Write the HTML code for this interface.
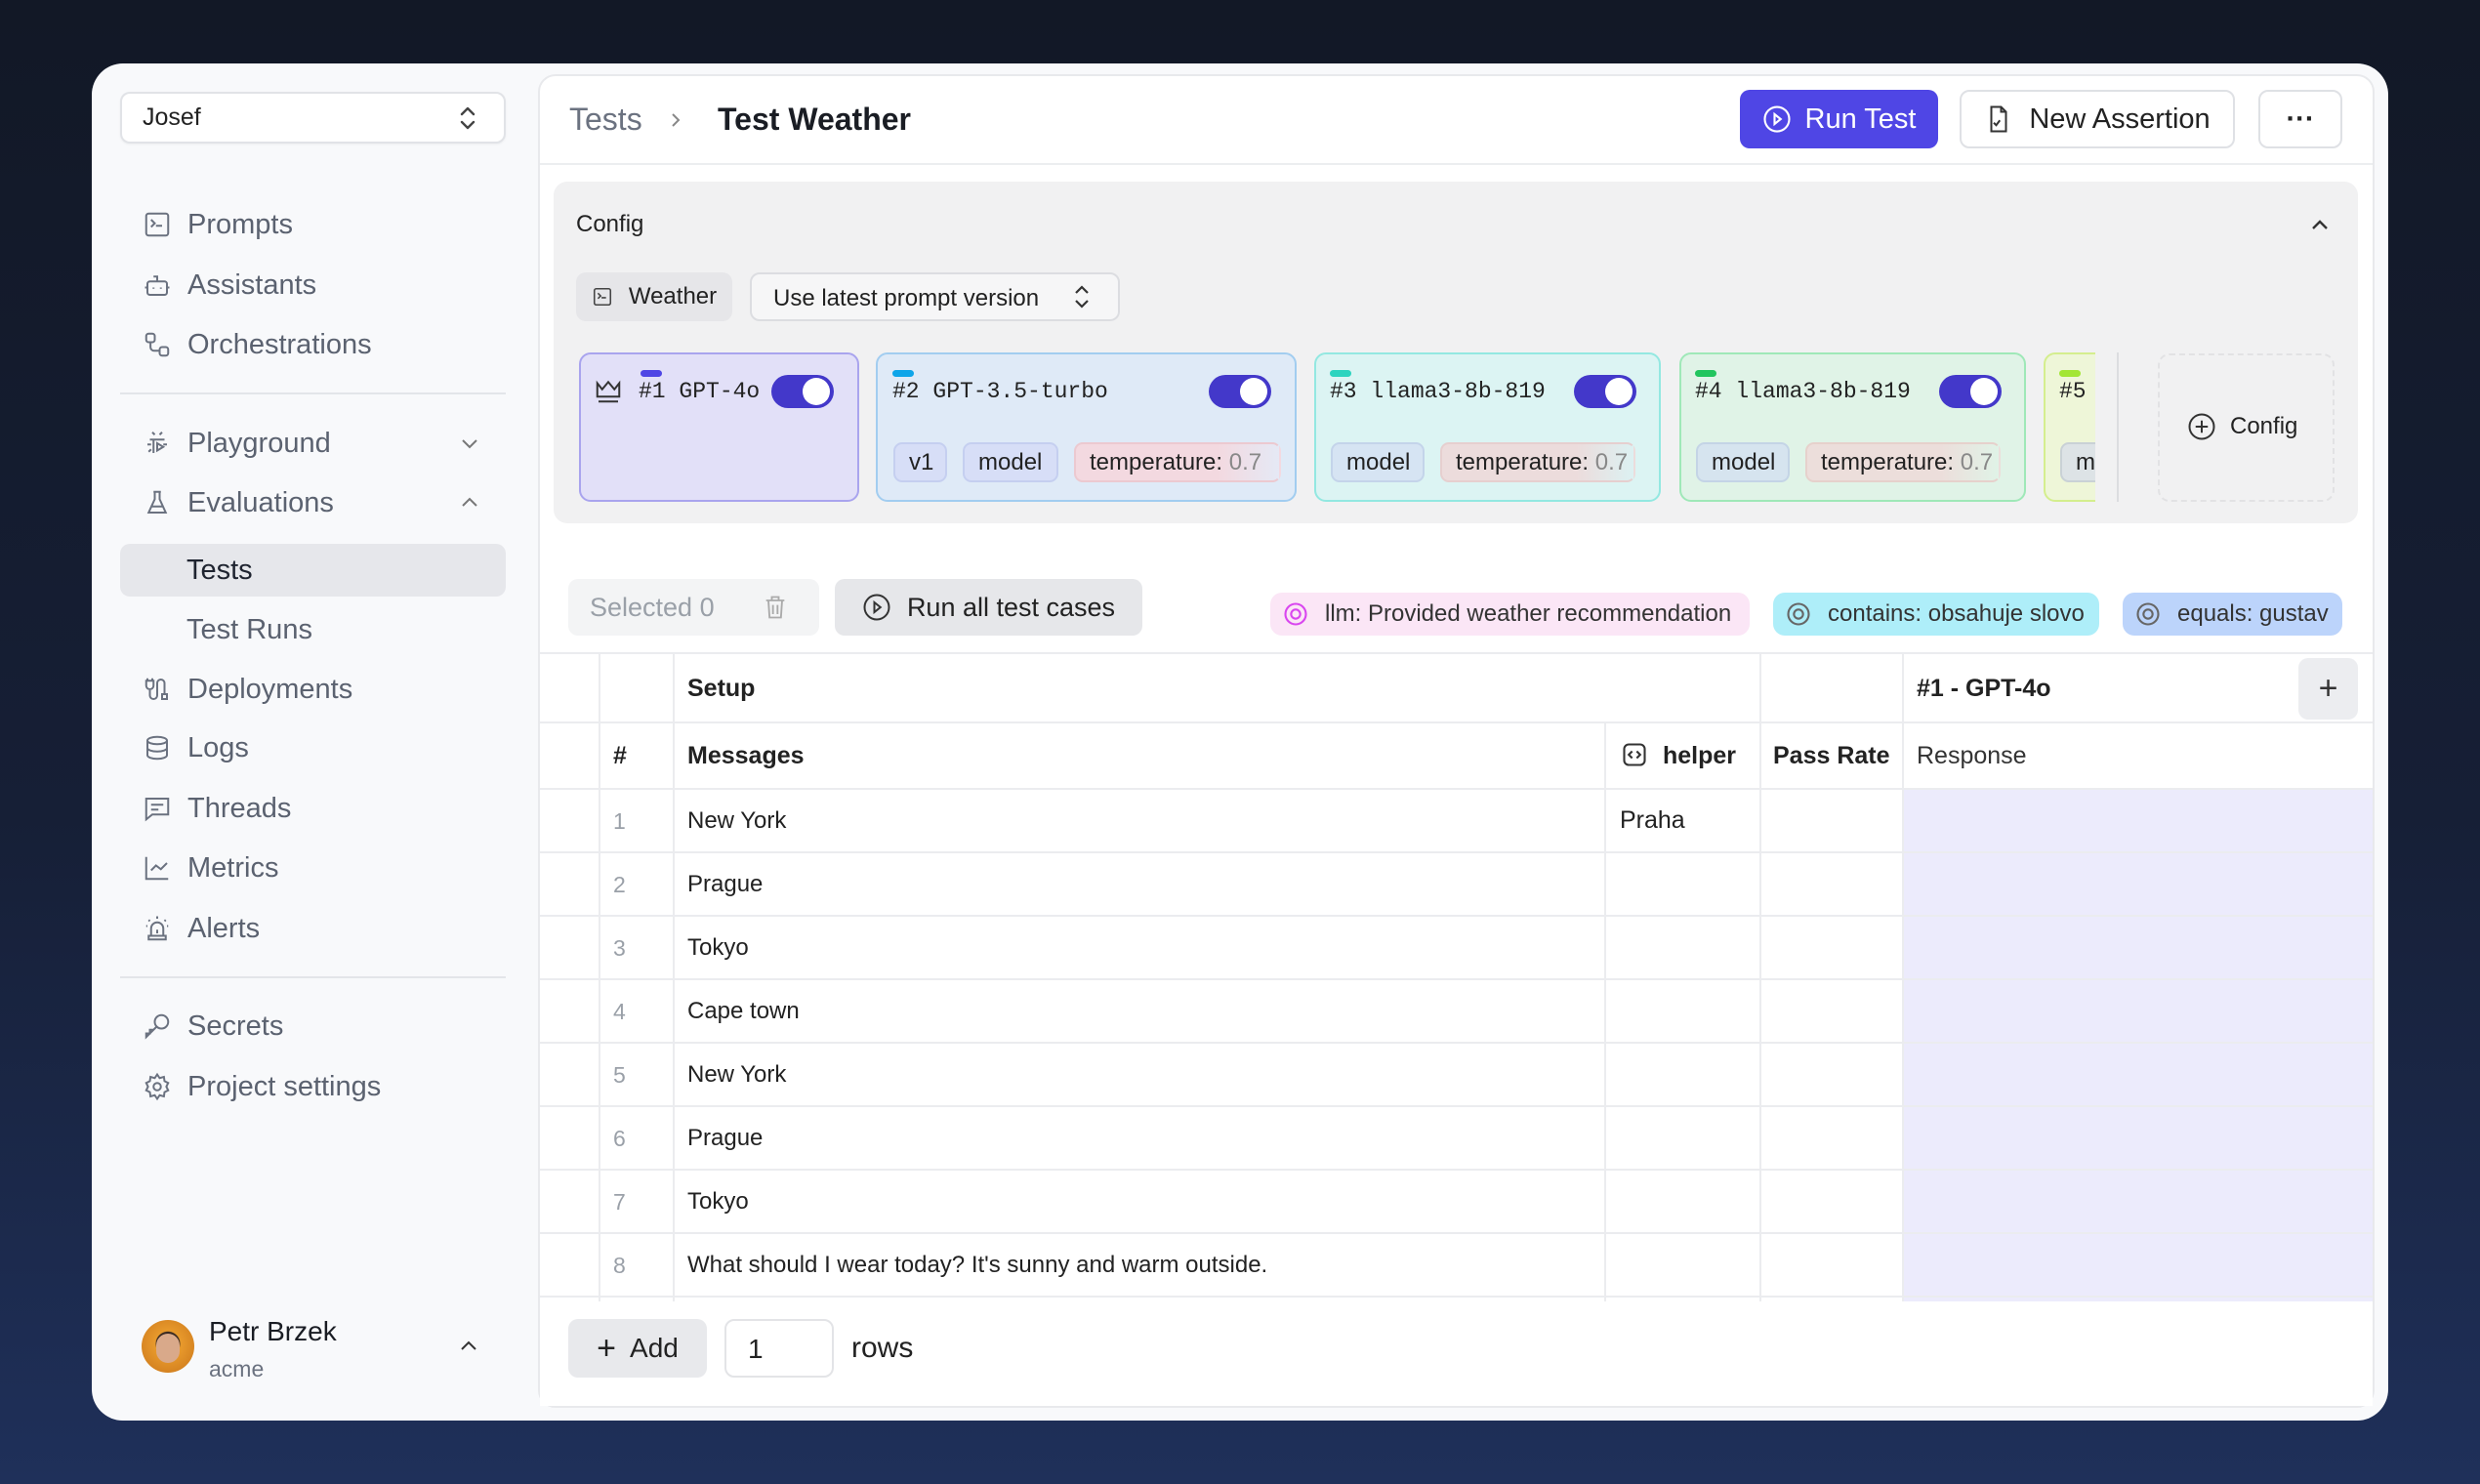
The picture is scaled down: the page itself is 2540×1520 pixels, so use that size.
<!DOCTYPE html>
<html><head><meta charset="utf-8"><style>
*{box-sizing:border-box;margin:0;padding:0}
body{width:2540px;height:1520px;overflow:hidden;font-family:"Liberation Sans",sans-serif;background:linear-gradient(180deg,#121826 0%,#161f36 55%,#1f305a 100%);position:relative}
.a{position:absolute}
.card{left:94px;top:65px;width:2352px;height:1390px;background:#f8f9fb;border-radius:32px}
.nav{left:143px;height:50px;width:380px;display:flex;align-items:center;font-size:29px;color:#5b6270}
.nav svg{width:30px;height:30px;margin-right:16px;margin-left:3px}
.sub{left:191px;font-size:29px;color:#5b6270;height:50px;line-height:50px}
.div{height:2px;background:#e3e5e9;left:123px;width:395px}
.main{left:551px;top:76px;width:1881px;height:1366px;background:#fff;border:2px solid #e8e9ec;border-radius:18px;overflow:hidden}
.btn{display:flex;align-items:center;justify-content:center;border-radius:10px;font-size:29px}
.mc{top:361px;height:153px;border-radius:12px;border:2.5px solid}
.mono{font-family:"Liberation Mono",monospace;font-size:23px;color:#222}
.bar{width:22px;height:7px;border-radius:4px}
.tg{width:64px;height:34px;border-radius:17px;background:#4338ca}
.tg:after{content:"";position:absolute;right:4px;top:3px;width:28px;height:28px;border-radius:50%;background:#fff}
.chip{top:453px;height:41px;border-radius:9px;font-size:24px;display:flex;align-items:center;padding:0 14px;color:#222;border:2px solid}
.as{top:607px;height:44px;border-radius:12px;font-size:24px;display:flex;align-items:center;color:#333}
.as svg{width:28px;height:28px;margin:0 16px 0 12px}
.hl{background:#ebecef;height:2px}
.vl{background:#ebecef;width:2px}
.td{font-size:24px;color:#222}
.num{font-size:23px;color:#9aa0a8}
</style></head><body>
<div class="a card"></div>

<div class="a" style="left:123px;top:94px;width:395px;height:53px;border:2px solid #e1e3e7;border-radius:10px;background:#fff;box-shadow:0 1px 2px rgba(0,0,0,.05)"></div>
<div class="a" style="left:146px;top:106px;font-size:25px;color:#222">Josef</div>
<svg class="a" style="left:466px;top:106px" width="26" height="30" viewBox="0 0 26 30" fill="none" stroke="#444" stroke-width="2.4" stroke-linecap="round" stroke-linejoin="round"><path d="M7 11l6-6 6 6M7 19l6 6 6-6"/></svg>

<div class="a nav" style="top:205px"><svg viewBox="0 0 24 24" fill="none" stroke="#6b7280" stroke-width="1.6"><rect x="3" y="3" width="18" height="18" rx="2"/><path d="M7 8l3 3-3 3M11 13h5"/></svg>Prompts</div>
<div class="a nav" style="top:267px"><svg viewBox="0 0 24 24" fill="none" stroke="#6b7280" stroke-width="1.6"><rect x="4" y="9" width="16" height="11" rx="2"/><path d="M12 9V5h-3M9 14v1M15 14v1M2 14h2M20 14h2"/></svg>Assistants</div>
<div class="a nav" style="top:328px"><svg viewBox="0 0 24 24" fill="none" stroke="#6b7280" stroke-width="1.6"><rect x="3" y="3" width="7" height="7" rx="2"/><rect x="14" y="14" width="7" height="7" rx="2"/><path d="M6.5 10v4a3 3 0 003 3H14"/></svg>Orchestrations</div>
<div class="a div" style="top:402px"></div>
<div class="a nav" style="top:429px"><svg viewBox="0 0 24 24" fill="none" stroke="#6b7280" stroke-width="1.6"><path d="M8 3l2 2M16 3l-2 2M6 9h12M4 13h3M17 13h3M5 19l2-2M9 9v11M12 12v6l5-3z"/></svg>Playground</div>
<svg class="a" style="left:470px;top:444px" width="22" height="20" viewBox="0 0 22 20" fill="none" stroke="#777" stroke-width="2"><path d="M4 7l7 7 7-7"/></svg>
<div class="a nav" style="top:490px"><svg viewBox="0 0 24 24" fill="none" stroke="#6b7280" stroke-width="1.6"><path d="M9 3h6M10 3v6L5 20h14L14 9V3M7 15h10"/></svg>Evaluations</div>
<svg class="a" style="left:470px;top:505px" width="22" height="20" viewBox="0 0 22 20" fill="none" stroke="#777" stroke-width="2"><path d="M4 13l7-7 7 7"/></svg>
<div class="a" style="left:123px;top:557px;width:395px;height:54px;background:#e6e7eb;border-radius:10px"></div>
<div class="a sub" style="top:559px;color:#1f2430">Tests</div>
<div class="a sub" style="top:620px">Test Runs</div>
<div class="a nav" style="top:681px"><svg viewBox="0 0 24 24" fill="none" stroke="#6b7280" stroke-width="1.6"><path d="M4 3v2M8 3v2M3 5h6v4a3 3 0 01-6 0zM6 12v5a3 3 0 006 0V7a3 3 0 016 0v9M16 16h4v4h-4z"/></svg>Deployments</div>
<div class="a nav" style="top:741px"><svg viewBox="0 0 24 24" fill="none" stroke="#6b7280" stroke-width="1.6"><ellipse cx="12" cy="6" rx="8" ry="3"/><path d="M4 6v12c0 1.7 3.6 3 8 3s8-1.3 8-3V6M4 12c0 1.7 3.6 3 8 3s8-1.3 8-3"/></svg>Logs</div>
<div class="a nav" style="top:803px"><svg viewBox="0 0 24 24" fill="none" stroke="#6b7280" stroke-width="1.6"><path d="M3 4h18v13H8l-5 4zM7 9h10M7 13h6"/></svg>Threads</div>
<div class="a nav" style="top:864px"><svg viewBox="0 0 24 24" fill="none" stroke="#6b7280" stroke-width="1.6"><path d="M3 3v18h18M7 14l4-4 4 3 5-5"/></svg>Metrics</div>
<div class="a nav" style="top:926px"><svg viewBox="0 0 24 24" fill="none" stroke="#6b7280" stroke-width="1.6"><path d="M7 18v-6a5 5 0 0110 0v6M5 21h14v-3H5zM12 2v2M3 10h1M20 10h1M5 5l1 1M19 5l-1 1M12 13v3"/></svg>Alerts</div>
<div class="a div" style="top:1000px"></div>
<div class="a nav" style="top:1026px"><svg viewBox="0 0 24 24" fill="none" stroke="#6b7280" stroke-width="1.6"><circle cx="15.5" cy="8.5" r="5.5"/><path d="M11.5 12.5L3 21v-3h3v-3h3l2.5-2.5"/></svg>Secrets</div>
<div class="a nav" style="top:1088px"><svg viewBox="0 0 24 24" fill="none" stroke="#6b7280" stroke-width="1.6"><circle cx="12" cy="12" r="3"/><path d="M12 2l2 3 3.5-1 .5 3.5L21 9l-1.5 3 1.5 3-3 1.5-.5 3.5-3.5-1-2 3-2-3-3.5 1-.5-3.5L3 15l1.5-3L3 9l3-1.5.5-3.5 3.5 1z"/></svg>Project settings</div>

<div class="a" style="left:145px;top:1352px;width:54px;height:54px;border-radius:50%;background:radial-gradient(circle at 50% 45%,#3a2a22 0 30%,#e89a2c 32%,#c9741a 100%)"></div>
<div class="a" style="left:160px;top:1366px;width:24px;height:30px;border-radius:12px;background:#d9a98a"></div>
<div class="a" style="left:214px;top:1348px;font-size:28px;color:#1a1d24">Petr Brzek</div>
<div class="a" style="left:214px;top:1389px;font-size:23px;color:#6b7280">acme</div>
<svg class="a" style="left:469px;top:1369px" width="22" height="20" viewBox="0 0 22 20" fill="none" stroke="#333" stroke-width="2"><path d="M4 13l7-7 7 7"/></svg>

<div class="a main"></div>
<div class="a" style="left:583px;top:104px;font-size:32px;color:#6b7280">Tests</div>
<svg class="a" style="left:684px;top:112px" width="16" height="22" viewBox="0 0 16 22" fill="none" stroke="#888" stroke-width="2"><path d="M5 5l6 6-6 6"/></svg>
<div class="a" style="left:735px;top:104px;font-size:32px;color:#1a1d24;font-weight:bold">Test Weather</div>

<div class="a btn" style="left:1782px;top:92px;width:203px;height:60px;background:#4f46e5;color:#fff"><svg width="30" height="30" viewBox="0 0 24 24" fill="none" stroke="#fff" stroke-width="1.7" style="margin-right:14px"><circle cx="12" cy="12" r="10"/><path d="M10 8l5 4-5 4z"/></svg>Run Test</div>
<div class="a btn" style="left:2007px;top:92px;width:282px;height:60px;border:2px solid #dfe1e5;color:#222;background:#fff"><svg width="30" height="30" viewBox="0 0 24 24" fill="none" stroke="#333" stroke-width="1.6" style="margin-right:16px"><path d="M14 2H6v20h12V6zM14 2v4h4M8 15l2 2 3-4"/></svg>New Assertion</div>
<div class="a btn" style="left:2313px;top:92px;width:86px;height:60px;border:2px solid #dfe1e5;color:#222;background:#fff;font-weight:bold">···</div>
<div class="a hl" style="left:553px;top:167px;width:1877px;background:#eceef0"></div>

<div class="a" style="left:567px;top:186px;width:1848px;height:350px;background:#f1f1f2;border-radius:14px"></div>
<div class="a" style="left:590px;top:216px;font-size:24px;color:#222">Config</div>
<svg class="a" style="left:2365px;top:221px" width="22" height="18" viewBox="0 0 22 18" fill="none" stroke="#333" stroke-width="2.4"><path d="M4 13l7-7 7 7"/></svg>
<div class="a btn" style="left:590px;top:279px;width:160px;height:50px;background:#e6e6e9;font-size:24px;color:#222"><svg width="22" height="22" viewBox="0 0 24 24" fill="none" stroke="#444" stroke-width="1.7" style="margin-right:16px"><rect x="3" y="3" width="18" height="18" rx="2"/><path d="M7 8l3 3-3 3M11 13h5"/></svg>Weather</div>
<div class="a" style="left:768px;top:279px;width:379px;height:50px;border:2px solid #dcdde1;border-radius:10px;background:#f6f6f7;font-size:24px;color:#222;padding:11px 0 0 22px">Use latest prompt version</div>
<svg class="a" style="left:1096px;top:290px" width="24" height="28" viewBox="0 0 24 28" fill="none" stroke="#333" stroke-width="2.2"><path d="M6 10l6-6 6 6M6 18l6 6 6-6"/></svg>

<div class="a mc" style="left:593px;width:287px;background:#e2e0f8;border-color:#a9a4ee"></div>
<svg class="a" style="left:608px;top:385px" width="30" height="30" viewBox="0 0 24 24" fill="none" stroke="#333" stroke-width="1.6"><path d="M3 6l4 5 5-6 5 6 4-5v11H3zM4 21h16"/></svg>
<div class="a bar" style="left:656px;top:379px;background:#4f46e5"></div>
<div class="a mono" style="left:654px;top:388px">#1 GPT-4o</div>
<div class="a tg" style="left:790px;top:384px"></div>

<div class="a mc" style="left:897px;width:431px;background:#dfeaf7;border-color:#a2cdf0"></div>
<div class="a bar" style="left:914px;top:379px;background:#0ea5e9"></div>
<div class="a mono" style="left:914px;top:388px">#2 GPT-3.5-turbo</div>
<div class="a tg" style="left:1238px;top:384px"></div>
<div class="a chip" style="left:915px;width:55px;background:#d7def7;border-color:#c5cff0">v1</div>
<div class="a chip" style="left:986px;width:98px;background:#d7def7;border-color:#c5cff0">model</div>
<div class="a chip" style="left:1100px;width:212px;background:linear-gradient(90deg,#f3d9e0 70%,#e5e9f5);border-color:#ecc9d0 transparent #ecc9d0 #ecc9d0">temperature:&nbsp;<span style="color:#888">0.7</span></div>

<div class="a mc" style="left:1346px;width:355px;background:#dcf4f3;border-color:#93e8e1"></div>
<div class="a bar" style="left:1362px;top:379px;background:#2dd4bf"></div>
<div class="a mono" style="left:1362px;top:388px">#3 llama3-8b-819</div>
<div class="a tg" style="left:1612px;top:384px"></div>
<div class="a chip" style="left:1363px;width:96px;background:#d6e4f3;border-color:#c4d4ea">model</div>
<div class="a chip" style="left:1475px;width:200px;background:linear-gradient(90deg,#ecdcdc 70%,#dcf1f2);border-color:#e6cfcf transparent #e6cfcf #e6cfcf">temperature:&nbsp;<span style="color:#888">0.7</span></div>

<div class="a mc" style="left:1720px;width:355px;background:#e0f3e7;border-color:#9fe8b8"></div>
<div class="a bar" style="left:1736px;top:379px;background:#22c55e"></div>
<div class="a mono" style="left:1736px;top:388px">#4 llama3-8b-819</div>
<div class="a tg" style="left:1986px;top:384px"></div>
<div class="a chip" style="left:1737px;width:96px;background:#d6e4ef;border-color:#c4d4e6">model</div>
<div class="a chip" style="left:1849px;width:200px;background:linear-gradient(90deg,#ecdedb 70%,#e0f3e7);border-color:#e6d1cc transparent #e6d1cc #e6d1cc">temperature:&nbsp;<span style="color:#888">0.7</span></div>

<div class="a" style="left:2093px;top:361px;width:53px;height:153px;overflow:hidden">
<div class="a mc" style="left:0;top:0;width:120px;background:#eef6d8;border-color:#d4ee8e"></div>
<div class="a bar" style="left:16px;top:18px;background:#a3e635"></div>
<div class="a mono" style="left:16px;top:27px">#5</div>
<div class="a chip" style="left:17px;top:92px;width:90px;background:#dde3e6;border-color:#c9d1d6">m</div>
</div>
<div class="a vl" style="left:2168px;top:361px;height:153px;background:#dcdde0"></div>
<div class="a" style="left:2210px;top:362px;width:181px;height:152px;border:2px dashed #e2e2e4;border-radius:12px"></div>
<div class="a" style="left:2240px;top:422px;font-size:24px;color:#222;display:flex;align-items:center"><svg width="30" height="30" viewBox="0 0 24 24" fill="none" stroke="#333" stroke-width="1.6" style="margin-right:14px"><circle cx="12" cy="12" r="10"/><path d="M12 7v10M7 12h10"/></svg>Config</div>

<div class="a btn" style="left:582px;top:593px;width:257px;height:58px;background:#f3f4f5;color:#9aa0a8;font-size:27px;justify-content:flex-start;padding-left:22px">Selected 0<svg width="28" height="28" viewBox="0 0 24 24" fill="none" stroke="#aaa" stroke-width="1.6" style="margin-left:48px"><path d="M4 6h16M9 6V3h6v3M6 6l1 15h10l1-15M10 10v8M14 10v8"/></svg></div>
<div class="a btn" style="left:855px;top:593px;width:315px;height:58px;background:#e6e7ea;color:#222;font-size:27px"><svg width="30" height="30" viewBox="0 0 24 24" fill="none" stroke="#333" stroke-width="1.6" style="margin-right:16px"><circle cx="12" cy="12" r="10"/><path d="M10 8l5 4-5 4z"/></svg>Run all test cases</div>

<div class="a as" style="left:1301px;width:491px;background:#fbe6f6"><svg viewBox="0 0 24 24" fill="none" stroke="#d946ef" stroke-width="1.8"><circle cx="12" cy="12" r="9"/><circle cx="12" cy="12" r="4"/></svg>llm: Provided weather recommendation</div>
<div class="a as" style="left:1816px;width:334px;background:#aeeef9"><svg viewBox="0 0 24 24" fill="none" stroke="#666" stroke-width="1.8"><circle cx="12" cy="12" r="9"/><circle cx="12" cy="12" r="4"/></svg>contains: obsahuje slovo</div>
<div class="a as" style="left:2174px;width:225px;background:#bcd4fb"><svg viewBox="0 0 24 24" fill="none" stroke="#666" stroke-width="1.8"><circle cx="12" cy="12" r="9"/><circle cx="12" cy="12" r="4"/></svg>equals: gustav</div>

<div class="a" style="left:1949px;top:808px;width:481px;height:525px;background:#ecebfc"></div>
<div class="a hl" style="left:553px;top:668px;width:1877px"></div>
<div class="a hl" style="left:553px;top:739px;width:1877px"></div>
<div class="a hl" style="left:553px;top:807px;width:1877px"></div>
<div class="a hl" style="left:553px;top:872px;width:1877px"></div>
<div class="a hl" style="left:553px;top:937px;width:1877px"></div>
<div class="a hl" style="left:553px;top:1002px;width:1877px"></div>
<div class="a hl" style="left:553px;top:1067px;width:1877px"></div>
<div class="a hl" style="left:553px;top:1132px;width:1877px"></div>
<div class="a hl" style="left:553px;top:1197px;width:1877px"></div>
<div class="a hl" style="left:553px;top:1262px;width:1877px"></div>
<div class="a hl" style="left:553px;top:1327px;width:1877px"></div>
<div class="a vl" style="left:613px;top:669px;height:664px"></div>
<div class="a vl" style="left:689px;top:669px;height:664px"></div>
<div class="a vl" style="left:1643px;top:740px;height:593px"></div>
<div class="a vl" style="left:1802px;top:669px;height:664px"></div>
<div class="a vl" style="left:1948px;top:669px;height:664px"></div>

<div class="a" style="left:704px;top:691px;font-size:25px;font-weight:bold;color:#222">Setup</div>
<div class="a" style="left:1963px;top:691px;font-size:25px;font-weight:bold;color:#222">#1 - GPT-4o</div>
<div class="a btn" style="left:2354px;top:674px;width:61px;height:63px;background:#ecedf0;font-size:34px;color:#333">+</div>
<div class="a" style="left:628px;top:760px;font-size:25px;font-weight:bold;color:#222">#</div>
<div class="a" style="left:704px;top:760px;font-size:25px;font-weight:bold;color:#222">Messages</div>
<svg class="a" style="left:1660px;top:759px" width="28" height="28" viewBox="0 0 24 24" fill="none" stroke="#333" stroke-width="1.8"><rect x="3" y="3" width="18" height="18" rx="4"/><path d="M10 9l-3 3 3 3M14 9l3 3-3 3"/></svg>
<div class="a" style="left:1703px;top:760px;font-size:25px;font-weight:bold;color:#222">helper</div>
<div class="a" style="left:1816px;top:760px;font-size:25px;font-weight:bold;color:#222">Pass Rate</div>
<div class="a" style="left:1963px;top:760px;font-size:25px;color:#333">Response</div>

<div class="a num" style="left:628px;top:828px">1</div><div class="a td" style="left:704px;top:827px">New York</div><div class="a td" style="left:1659px;top:826px;font-size:25px">Praha</div>
<div class="a num" style="left:628px;top:893px">2</div><div class="a td" style="left:704px;top:892px">Prague</div>
<div class="a num" style="left:628px;top:958px">3</div><div class="a td" style="left:704px;top:957px">Tokyo</div>
<div class="a num" style="left:628px;top:1023px">4</div><div class="a td" style="left:704px;top:1022px">Cape town</div>
<div class="a num" style="left:628px;top:1088px">5</div><div class="a td" style="left:704px;top:1087px">New York</div>
<div class="a num" style="left:628px;top:1153px">6</div><div class="a td" style="left:704px;top:1152px">Prague</div>
<div class="a num" style="left:628px;top:1218px">7</div><div class="a td" style="left:704px;top:1217px">Tokyo</div>
<div class="a num" style="left:628px;top:1283px">8</div><div class="a td" style="left:704px;top:1282px">What should I wear today? It's sunny and warm outside.</div>
<div class="a" style="left:553px;top:1333px;width:1877px;height:107px;background:#fff"></div>

<div class="a btn" style="left:582px;top:1351px;width:142px;height:60px;background:#e8e9ec;color:#222;font-size:28px"><span style="font-size:34px;margin-right:14px">+</span>Add</div>
<div class="a" style="left:742px;top:1351px;width:112px;height:60px;border:2px solid #e3e4e7;border-radius:10px;font-size:28px;color:#222;padding:13px 0 0 22px">1</div>
<div class="a" style="left:872px;top:1364px;font-size:30px;color:#222">rows</div>
</body></html>
